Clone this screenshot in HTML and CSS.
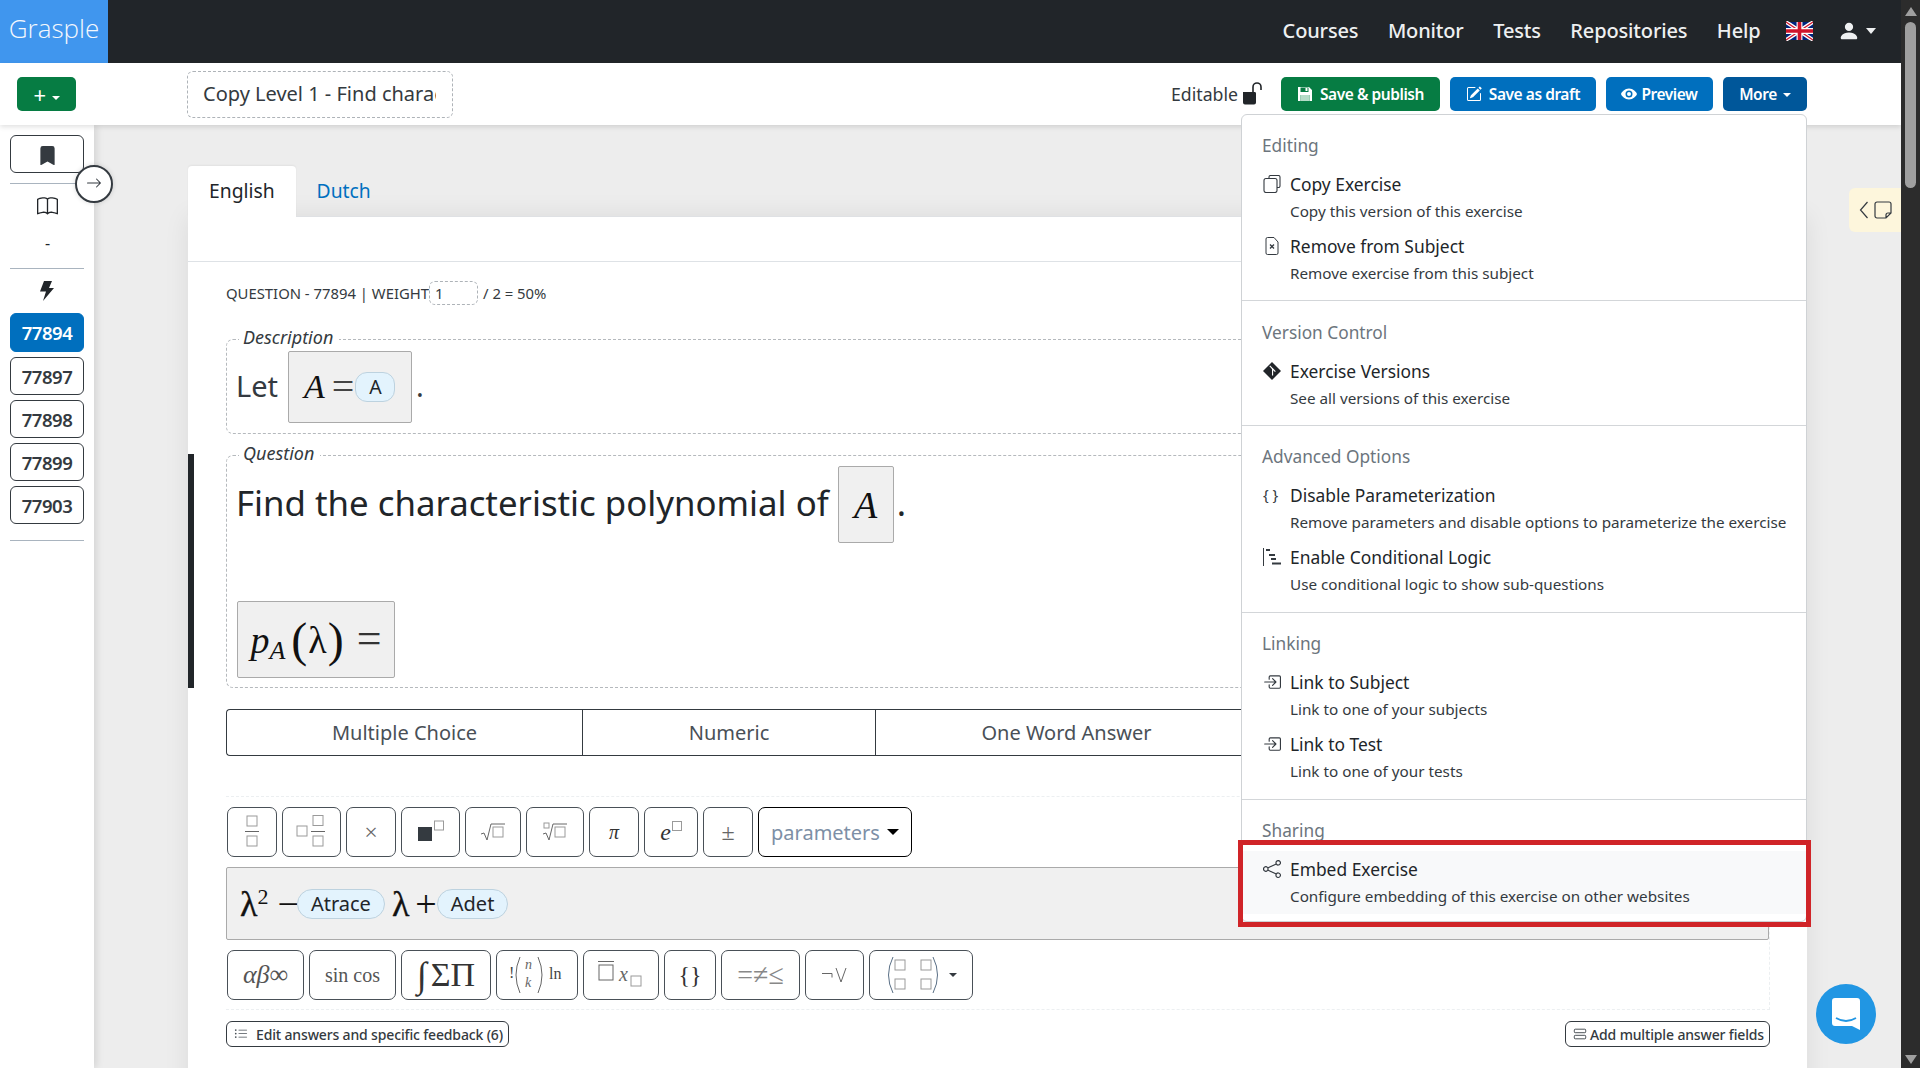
FILE: index.html
```html
<!DOCTYPE html>
<html lang="en">
<head>
<meta charset="UTF-8">
<title>Grasple</title>
<link rel="stylesheet" href="styles.css">
</head>
<body>
<div id="screen">
  <div id="page">
    <!-- top navigation -->
    <header class="navbar">
      <a class="logo">Grasple</a>
      <nav class="nav-links">
        <a>Courses</a>
        <a>Monitor</a>
        <a>Tests</a>
        <a>Repositories</a>
        <a>Help</a>
        <svg class="flag" viewBox="0 0 60 40">
          <rect width="60" height="40" fill="#fff"/>
          <path d="M0 0L60 40M60 0L0 40" stroke="#fff" stroke-width="8"/>
          <path d="M0 0L60 40M60 0L0 40" stroke="#cf142b" stroke-width="3"/>
          <path d="M8 0L25 11V0ZM52 0L35 11V0ZM0 5L15 15H0ZM60 5L45 15H60ZM0 35L15 25H0ZM60 35L45 25H60ZM8 40L25 29V40ZM52 40L35 29V40Z" fill="#00247d"/>
          <path d="M30 0V40M0 20H60" stroke="#fff" stroke-width="13"/>
          <path d="M30 0V40M0 20H60" stroke="#cf142b" stroke-width="8"/>
        </svg>
        <span class="user">
          <svg class="user-icon" viewBox="0 0 16 16"><path d="M3 14s-1 0-1-1 1-4 6-4 6 3 6 4-1 1-1 1H3zm5-6a3 3 0 1 0 0-6 3 3 0 0 0 0 6z"/></svg>
          <i class="caret"></i>
        </span>
      </nav>
    </header>

    <!-- edit toolbar -->
    <div class="toolbar">
      <button class="btn btn-green btn-plus">+<i class="caret caret-small"></i></button>
      <div class="title-input"><span>Copy Level 1 - Find characteristic polynomial</span></div>
      <div class="toolbar-right">
        <span class="editable">Editable</span>
        <svg class="lock" viewBox="0 0 20 24"><path d="M1 11h12a1.500 1.500 0 0 1 1 1.500v9a2 2 0 0 1-2 2H3a2 2 0 0 1-2-2z" fill="#212529"/><path d="M11 11V6a4 4 0 0 1 8 0v3" fill="none" stroke="#212529" stroke-width="1.600"/></svg>
        <button class="btn btn-green">
          <svg class="btn-icon" viewBox="0 0 16 16"><path d="M1 1h11l3 3v11H1zM3.500 1.500v4.500h8V1.500zM3.500 9v6h9V9z" fill="#fff" fill-rule="evenodd"/><path d="M8.500 2h2v3h-2z" fill="#fff"/><path d="M3.500 9h9v6h-9z" fill="#b5dcc8"/></svg>Save &amp; publish
        </button>
        <button class="btn btn-blue">
          <svg class="btn-icon" viewBox="0 0 16 16" fill="#fff"><path d="M15.502 1.940a.5.5 0 0 1 0 .706L14.459 3.690l-2-2L13.502.646a.5.5 0 0 1 .707 0l1.293 1.293zm-1.750 2.456-2-2L4.939 9.210a.5.5 0 0 0-.121.196l-.805 2.414a.25.25 0 0 0 .316.316l2.414-.805a.5.5 0 0 0 .196-.12l6.813-6.814z"/><path d="M1 13.500A1.500 1.500 0 0 0 2.500 15h11a1.500 1.500 0 0 0 1.500-1.500v-6a.5.5 0 0 0-1 0v6a.5.5 0 0 1-.5.5h-11a.5.5 0 0 1-.5-.5v-11a.5.5 0 0 1 .5-.5H9a.5.5 0 0 0 0-1H2.500A1.500 1.500 0 0 0 1 2.500v11z"/></svg>Save as draft
        </button>
        <button class="btn btn-blue">
          <svg class="btn-icon btn-icon-eye" viewBox="0 0 16 16"><path d="M8 2.500C12 2.500 15.500 6 16 8c-.5 2-4 5.500-8 5.500S.5 10 0 8c.5-2 4-5.500 8-5.500zm0 2a3.500 3.500 0 1 0 0 7 3.500 3.500 0 0 0 0-7zm0 1.500a2 2 0 1 1 0 4 2 2 0 0 1 0-4z" fill="#fff" fill-rule="evenodd"/></svg>Preview
        </button>
        <button class="btn btn-dark">More<i class="caret caret-small"></i></button>
      </div>
    </div>

    <div class="workspace">
      <!-- left sidebar -->
      <aside class="sidebar">
        <button class="side-btn side-top">
          <svg class="icon-bookmark" viewBox="0 0 16 16" fill="#343a40"><path d="M2 2v13.500a.5.5 0 0 0 .74.439L8 13.069l5.260 2.870A.5.5 0 0 0 14 15.500V2a2 2 0 0 0-2-2H4a2 2 0 0 0-2 2z"/></svg>
        </button>
        <hr class="side-rule side-rule-first">
        <svg class="side-book" viewBox="0 0 16 16" fill="#212529"><path d="M1 2.828c.885-.37 2.154-.769 3.388-.893 1.330-.134 2.458.063 3.112.752v9.746c-.935-.53-2.120-.603-3.213-.493-1.180.12-2.370.461-3.287.811V2.828zm7.500-.141c.654-.689 1.782-.886 3.112-.752 1.234.124 2.503.523 3.388.893v9.923c-.918-.35-2.107-.692-3.287-.81-1.094-.111-2.278-.039-3.213.492V2.687zM8 1.783C7.015.936 5.587.81 4.287.94c-1.514.153-3.042.672-3.994 1.105A.5.5 0 0 0 0 2.500v11a.5.5 0 0 0 .707.455c.882-.4 2.303-.881 3.680-1.020 1.409-.142 2.590.087 3.223.877a.5.5 0 0 0 .78 0c.633-.79 1.814-1.019 3.222-.877 1.378.139 2.800.62 3.681 1.020A.5.5 0 0 0 16 13.500v-11a.5.5 0 0 0-.293-.455c-.952-.433-2.480-.952-3.994-1.105C10.413.809 8.985.936 8 1.783z"/></svg>
        <div class="side-dash">-</div>
        <hr class="side-rule">
        <svg class="side-bolt" viewBox="0 0 14 20" fill="#212529"><path d="M4 0h8L9 7h5L3 20l3-9.500H0z"/></svg>
        <button class="side-btn side-active">77894</button>
        <button class="side-btn">77897</button>
        <button class="side-btn">77898</button>
        <button class="side-btn">77899</button>
        <button class="side-btn">77903</button>
        <hr class="side-rule side-rule-last">
      </aside>

      <main class="main">
        <div class="tabs">
          <a class="tab tab-active">English</a>
          <a class="tab">Dutch</a>
        </div>
        <div class="card">
          <div class="card-head"></div>
          <div class="card-body">
            <div class="question-line">
              <span>QUESTION - 77894 | WEIGHT</span>
              <span class="weight-input">1</span>
              <span>/ 2 = 50%</span>
            </div>

            <fieldset class="block block-description">
              <legend>Description</legend>
              <div class="text-line text-small">
                <span class="text-lift">Let</span>
                <span class="math-box math-a">
                  <span class="math"><i>A</i><span class="math-eq">=</span></span>
                  <span class="pill pill-mono">A</span>
                </span>
                <span class="dot text-lift">.</span>
              </div>
            </fieldset>

            <div class="question-block">
              <fieldset class="block block-question">
                <legend>Question</legend>
                <div class="text-line text-big">
                  <span class="text-lift">Find the characteristic polynomial of</span>
                  <span class="math-box math-single"><span class="math math-large"><i>A</i></span></span>
                  <span class="dot text-lift">.</span>
                </div>
                <div class="math-box math-answer">
                  <span class="math math-large"><i>p</i><sub><i>A</i></sub><span class="paren">(</span><span class="lambda">λ</span><span class="paren">)</span><span class="math-eq-2">=</span></span>
                </div>
              </fieldset>
            </div>

            <div class="answer-types">
              <button class="type-btn type-1">Multiple Choice</button>
              <button class="type-btn type-2">Numeric</button>
              <button class="type-btn type-3">One Word Answer</button>
            </div>

            <div class="editor">
              <div class="tool-row">
                <button class="tool w50"><svg width="24" height="34" viewBox="0 0 24 34"><rect x="7" y="1" width="10" height="10" class="box"/><path d="M5 16.500H19" class="line"/><rect x="7" y="21" width="10" height="10" class="box"/></svg></button>
                <button class="tool w59"><svg width="32" height="34" viewBox="0 0 32 34"><rect x="1" y="11" width="10" height="10" class="box"/><rect x="17" y="0.500" width="10" height="10" class="box"/><path d="M15 16.500H29" class="line"/><rect x="17" y="21" width="10" height="10" class="box"/></svg></button>
                <button class="tool w50 tool-sym tool-light">×</button>
                <button class="tool w59"><svg width="28" height="24" viewBox="0 0 28 24"><rect x="1" y="7" width="14" height="14" fill="#343a40"/><rect x="17.500" y="1" width="9" height="9" class="box"/></svg></button>
                <button class="tool w56"><svg width="26" height="20" viewBox="0 0 26 20"><path d="M1 12l3-1 3 7 4-16H25" class="line"/><rect x="13" y="5" width="10" height="10" class="box"/></svg></button>
                <button class="tool w58"><svg width="26" height="20" viewBox="0 0 26 20"><rect x="2" y="1" width="5" height="5" class="box"/><path d="M1 12l3-1 3 7 4-16H25" class="line"/><rect x="13" y="5" width="10" height="10" class="box"/></svg></button>
                <button class="tool w50 tool-serif"><i>π</i></button>
                <button class="tool w54 tool-serif tool-e"><i>e</i><svg class="sup-box" width="10" height="10" viewBox="0 0 10 10"><rect x=".5" y=".5" width="9" height="9" class="box"/></svg></button>
                <button class="tool w50 tool-sym tool-light">±</button>
                <button class="tool tool-params">parameters<i class="caret caret-black"></i></button>
              </div>

              <div class="math-field">
                <span class="math math-lambda">λ<sup>2</sup></span>
                <span class="math math-op">−</span>
                <span class="pill">Atrace</span>
                <span class="math math-lambda math-lambda-2">λ</span>
                <span class="math math-op math-plus">+</span>
                <span class="pill">Adet</span>
              </div>

              <div class="tool-row tool-row-2">
                <button class="tool w77 tool-serif tool-grey tool-alpha"><i>αβ</i>∞</button>
                <button class="tool w87 tool-serif tool-grey">sin cos</button>
                <button class="tool w90 tool-serif tool-big"><i class="integral">∫</i>ΣΠ</button>
                <button class="tool w82 tool-serif"><svg width="56" height="38" viewBox="0 0 56 38"><text x="0" y="22" class="svg-math">!</text><path d="M11 1Q3 19 11 37M29 1Q37 19 29 37" class="line"/><text x="16" y="13" class="svg-math-i">n</text><text x="16" y="31" class="svg-math-i">k</text><text x="40" y="23" class="svg-math">ln</text></svg></button>
                <button class="tool w76"><svg width="46" height="30" viewBox="0 0 46 30"><path d="M0 1.500H16" class="line"/><rect x="1" y="5" width="14" height="15" class="box box-dark"/><text x="21" y="21" class="svg-math-i svg-math-big">x</text><rect x="33" y="16" width="10" height="10" class="box"/></svg></button>
                <button class="tool w52 tool-serif tool-big-2">{}</button>
                <button class="tool w79 tool-sym tool-light tool-wide">=≠≤</button>
                <button class="tool w59"><svg width="28" height="16" viewBox="0 0 28 16"><path d="M1 6.500H11V10.500M15 1l5 14 5-14" class="line"/></svg></button>
                <button class="tool w104"><svg width="56" height="38" viewBox="0 0 56 38"><path d="M8 1Q-1 19 8 37M48 1Q57 19 48 37" class="line-blue"/><rect x="10" y="4" width="10" height="10" class="box"/><rect x="36" y="4" width="10" height="10" class="box"/><rect x="10" y="23" width="10" height="10" class="box"/><rect x="36" y="23" width="10" height="10" class="box"/></svg><i class="caret caret-small caret-dark"></i></button>
              </div>
            </div>

            <div class="bottom-row">
              <button class="small-btn">
                <svg class="icon-13 icon-list" viewBox="0 0 16 16" fill="#495057"><path d="M5 11.500a.5.5 0 0 1 .5-.5h9a.5.5 0 0 1 0 1h-9a.5.5 0 0 1-.5-.5zm0-4a.5.5 0 0 1 .5-.5h9a.5.5 0 0 1 0 1h-9a.5.5 0 0 1-.5-.5zm0-4a.5.5 0 0 1 .5-.5h9a.5.5 0 0 1 0 1h-9a.5.5 0 0 1-.5-.5zm-3 1a1 1 0 1 0 0-2 1 1 0 0 0 0 2zm0 4a1 1 0 1 0 0-2 1 1 0 0 0 0 2zm0 4a1 1 0 1 0 0-2 1 1 0 0 0 0 2z"/></svg>Edit answers and specific feedback (6)
              </button>
              <button class="small-btn small-btn-right">
                <svg class="icon-13" viewBox="0 0 16 16" fill="none" stroke="#343a40"><rect x="1.500" y="2.500" width="13" height="4" rx="1"/><rect x="1.500" y="9.500" width="13" height="4" rx="1"/></svg>Add multiple answer fields
              </button>
            </div>
          </div>
        </div>
      </main>
    </div>

    <!-- things lying over the page -->
    <button class="collapse-btn">
      <svg class="icon-16" viewBox="0 0 16 16" fill="#343a40"><path d="M1 8a.5.5 0 0 1 .5-.5h11.793l-3.147-3.146a.5.5 0 0 1 .708-.708l4 4a.5.5 0 0 1 0 .708l-4 4a.5.5 0 0 1-.708-.708L13.293 8.500H1.500A.5.5 0 0 1 1 8z"/></svg>
    </button>

    <div class="note-tab">
      <svg width="10" height="18" viewBox="0 0 10 18"><path d="M8.500 1L1.500 9l7 8" fill="none" stroke="#343a40" stroke-width="1.200"/></svg>
      <svg width="18" height="18" viewBox="0 0 18 18"><path d="M12 17H3a2 2 0 0 1-2-2V3a2 2 0 0 1 2-2h12a2 2 0 0 1 2 2v9zM12 17v-3a2 2 0 0 1 2-2h3" fill="none" stroke="#343a40" stroke-width="1.200"/></svg>
    </div>

    <div class="chat-bubble">
      <svg width="28" height="32" viewBox="0 0 28 32"><path d="M3 0h22a3 3 0 0 1 3 3v29l-8-4H3a3 3 0 0 1-3-3V3a3 3 0 0 1 3-3z" fill="#fff"/><path d="M4 20q10 6 20 0" fill="none" stroke="#2196e3" stroke-width="1.800"/></svg>
    </div>

    <!-- More menu -->
    <div class="dropdown">
      <section class="menu-section">
        <h6>Editing</h6>
        <a class="menu-item">
          <svg class="menu-icon" viewBox="0 0 18 18" fill="none" stroke="#343a40" stroke-width="1.100"><path d="M6 3.500V2a1.500 1.500 0 0 1 1.500-1.500h8A1.500 1.500 0 0 1 17 2v9a1.500 1.500 0 0 1-1.500 1.500H14"/><rect x="1" y="3.500" width="13" height="14" rx="2"/></svg>
          <b>Copy Exercise</b><span>Copy this version of this exercise</span>
        </a>
        <a class="menu-item">
          <svg class="menu-icon" viewBox="0 0 18 18" fill="none" stroke="#343a40"><path d="M4.500.5H11l4 4.500V16a1.500 1.500 0 0 1-1.500 1.500h-9A1.500 1.500 0 0 1 3 16V2A1.500 1.500 0 0 1 4.500.5z"/><path d="M7 7.500l4 4M11 7.500l-4 4" stroke-width="1.300"/></svg>
          <b>Remove from Subject</b><span>Remove exercise from this subject</span>
        </a>
      </section>
      <section class="menu-section">
        <h6>Version Control</h6>
        <a class="menu-item">
          <svg class="menu-icon" viewBox="0 0 16 16"><path d="M8 0l8 8-8 8-8-8z" fill="#212529"/><path d="M6 3.500l2.500 2.500v6M8.500 6l2.500 2.500" stroke="#fff" fill="none"/></svg>
          <b>Exercise Versions</b><span>See all versions of this exercise</span>
        </a>
      </section>
      <section class="menu-section">
        <h6>Advanced Options</h6>
        <a class="menu-item">
          <span class="menu-icon menu-braces">{ }</span>
          <b>Disable Parameterization</b><span>Remove parameters and disable options to parameterize the exercise</span>
        </a>
        <a class="menu-item">
          <svg class="menu-icon" viewBox="0 0 18 18"><path d="M.5 0v18" stroke="#343a40" fill="none"/><path d="M3 1h4v2H3zM6 6h6v2H6zM8 10h5v2H8zM9 14.500h9v2H9z" fill="#343a40"/></svg>
          <b>Enable Conditional Logic</b><span>Use conditional logic to show sub-questions</span>
        </a>
      </section>
      <section class="menu-section">
        <h6>Linking</h6>
        <a class="menu-item">
          <svg class="menu-icon" viewBox="0 0 16 16" fill="#343a40"><path d="M6 3.500a.5.5 0 0 1 .5-.5h8a.5.5 0 0 1 .5.5v9a.5.5 0 0 1-.5.5h-8a.5.5 0 0 1-.5-.5v-2a.5.5 0 0 0-1 0v2A1.500 1.500 0 0 0 6.500 14h8a1.500 1.500 0 0 0 1.500-1.500v-9A1.500 1.500 0 0 0 14.500 2h-8A1.500 1.500 0 0 0 5 3.500v2a.5.5 0 0 0 1 0v-2z"/><path d="M11.854 8.354a.5.5 0 0 0 0-.708l-3-3a.5.5 0 1 0-.708.708L10.293 7.500H1.500a.5.5 0 0 0 0 1h8.793l-2.147 2.146a.5.5 0 0 0 .708.708l3-3z"/></svg>
          <b>Link to Subject</b><span>Link to one of your subjects</span>
        </a>
        <a class="menu-item">
          <svg class="menu-icon" viewBox="0 0 16 16" fill="#343a40"><path d="M6 3.500a.5.5 0 0 1 .5-.5h8a.5.5 0 0 1 .5.5v9a.5.5 0 0 1-.5.5h-8a.5.5 0 0 1-.5-.5v-2a.5.5 0 0 0-1 0v2A1.500 1.500 0 0 0 6.500 14h8a1.500 1.500 0 0 0 1.500-1.500v-9A1.500 1.500 0 0 0 14.500 2h-8A1.500 1.500 0 0 0 5 3.500v2a.5.5 0 0 0 1 0v-2z"/><path d="M11.854 8.354a.5.5 0 0 0 0-.708l-3-3a.5.5 0 1 0-.708.708L10.293 7.500H1.500a.5.5 0 0 0 0 1h8.793l-2.147 2.146a.5.5 0 0 0 .708.708l3-3z"/></svg>
          <b>Link to Test</b><span>Link to one of your tests</span>
        </a>
      </section>
      <section class="menu-section menu-section-last">
        <h6>Sharing</h6>
        <a class="menu-item menu-item-hover">
          <svg class="menu-icon" viewBox="0 0 16 16" fill="#343a40"><path d="M13.500 1a1.500 1.500 0 1 0 0 3 1.500 1.500 0 0 0 0-3zM11 2.500a2.500 2.500 0 1 1 .603 1.628l-6.718 3.120a2.499 2.499 0 0 1 0 1.504l6.718 3.120a2.500 2.500 0 1 1-.488.876l-6.718-3.120a2.500 2.500 0 1 1 0-3.256l6.718-3.120A2.500 2.500 0 0 1 11 2.500zm-8.500 4a1.500 1.500 0 1 0 0 3 1.500 1.500 0 0 0 0-3zm11 5.500a1.500 1.500 0 1 0 0 3 1.500 1.500 0 0 0 0-3z"/></svg>
          <b>Embed Exercise</b><span>Configure embedding of this exercise on other websites</span>
        </a>
      </section>
    </div>
    <div class="highlight-box"></div>
  </div>

  <!-- browser scrollbar -->
  <div class="scrollbar">
    <i class="arrow-up"></i>
    <div class="thumb"></div>
    <i class="arrow-down"></i>
  </div>
</div>
</body>
</html>
```
FILE: styles.css
```css
* {
  box-sizing: border-box;
}
html, body {
  margin: 0;
  height: 1068px;
  overflow: hidden;
}
body {
  font-family: "Noto Sans", sans-serif;
  color: #212529;
  background: #ededed;
}
button {
  font-family: inherit;
  cursor: pointer;
}
#screen {
  display: flex;
  height: 1068px;
}
#page {
  position: relative;
  flex: 1;
  min-width: 0;
  display: flex;
  flex-direction: column;
  overflow: hidden;
}

/* scrollbar */
.scrollbar {
  width: 19px;
  background: #2c2c2c;
  display: flex;
  flex-direction: column;
  align-items: center;
  padding: 7px 0 4px;
}
.thumb {
  width: 11px;
  height: 166px;
  margin-top: 6px;
  border-radius: 6px;
  background: #9f9f9f;
}
.arrow-up, .arrow-down {
  width: 0;
  height: 0;
  border-left: 6px solid transparent;
  border-right: 6px solid transparent;
}
.arrow-up {
  border-bottom: 9px solid #9f9f9f;
}
.arrow-down {
  margin-top: auto;
  border-top: 9px solid #9f9f9f;
}

/* navbar */
.navbar {
  height: 63px;
  flex: none;
  background: #212529;
  display: flex;
  align-items: center;
  justify-content: space-between;
}
.logo {
  width: 108px;
  height: 63px;
  background: #4096ee;
  color: #f4f8fd;
  font-size: 26px;
  font-weight: 300;
  line-height: 57px;
  text-align: center;
  font-family: "Open Sans", sans-serif;
}
.nav-links {
  display: flex;
  align-items: center;
  gap: 29.500px;
  margin-right: 25px;
  color: #eef0f1;
  font-size: 20px;
  font-weight: 500;
  letter-spacing: -.15px;
  line-height: 24px;
  padding-bottom: 2px;
}
.flag {
  width: 27px;
  height: 20px;
  margin-left: -4px;
}
.user {
  display: flex;
  align-items: center;
  gap: 6px;
  margin-left: -4.500px;
}
.user-icon {
  width: 22px;
  height: 22px;
  fill: #eef0f1;
}
.caret {
  display: inline-block;
  width: 0;
  height: 0;
  border-left: 5.500px solid transparent;
  border-right: 5.500px solid transparent;
  border-top: 6px solid #eef0f1;
}
.caret-small {
  border-left-width: 4px;
  border-right-width: 4px;
  border-top: 4px solid #fff;
  margin-left: 6px;
  vertical-align: 3px;
}
.caret-dark {
  border-top-color: #343a40;
  margin-left: 8px;
  vertical-align: 14px;
}
.caret-black {
  border-left-width: 6px;
  border-right-width: 6px;
  border-top-color: #000;
  margin-left: 7px;
  vertical-align: 3px;
}

/* toolbar */
.toolbar {
  position: relative;
  z-index: 2;
  height: 62px;
  flex: none;
  background: #fff;
  box-shadow: 0 2px 5px rgba(0, 0, 0, .12);
  display: flex;
  align-items: center;
  padding-left: 17px;
}
.btn {
  height: 34px;
  border: 0;
  border-radius: 5px;
  color: #fff;
  font-size: 15.500px;
  font-weight: 600;
  letter-spacing: -.45px;
  padding: 0;
  white-space: nowrap;
}
.btn-green {
  background: #067c43;
  width: 159px;
}
.btn-blue {
  background: #006fbe;
  width: 146px;
}
.btn-blue + .btn-blue {
  width: 107px;
}
.btn-dark {
  background: #00579a;
  width: 84px;
}
.btn-plus {
  width: 59px;
  font-size: 22px;
  font-weight: 400;
  line-height: 30px;
}
.btn-icon {
  width: 16px;
  height: 16px;
  margin-right: 7px;
  vertical-align: -2px;
}
.btn-icon-eye {
  margin-right: 4px;
}
.title-input {
  width: 266px;
  height: 47px;
  margin-left: 111px;
  border: 1px dashed #aeb3b8;
  border-radius: 6px;
  padding: 0 16px 0 15px;
  font-size: 20px;
  line-height: 43px;
  color: #343a40;
  overflow: hidden;
  white-space: nowrap;
}
.title-input span {
  display: block;
  overflow: hidden;
}
.toolbar-right {
  margin-left: auto;
  margin-right: 94px;
  display: flex;
  align-items: center;
  gap: 10px;
}
.editable {
  font-size: 17.700px;
  color: #343a40;
  margin-right: -6px;
}
.lock {
  width: 20px;
  height: 24px;
  margin-right: 9px;
  margin-top: -2px;
}

/* sidebar */
.workspace {
  flex: 1;
  display: flex;
  min-height: 0;
}
.sidebar {
  position: relative;
  z-index: 1;
  width: 94px;
  flex: none;
  background: #fff;
  box-shadow: 2px 0 8px rgba(0, 0, 0, .12);
  padding: 10px 10px 0;
  display: flex;
  flex-direction: column;
  align-items: stretch;
}
.side-btn {
  height: 38px;
  margin-bottom: 5px;
  padding: 0;
  background: #fff;
  border: 1px solid #343a40;
  border-radius: 6px;
  font-size: 18.500px;
  font-weight: 600;
  letter-spacing: -.45px;
  color: #343a40;
}
.side-top {
  margin-bottom: 0;
}
.side-active {
  height: 39px;
  background: #006fbe;
  border-color: #006fbe;
  color: #fff;
}
.side-rule {
  width: 100%;
  height: 1px;
  flex: none;
  margin: 0;
  border: 0;
  background: #a9b4bf;
}
.side-rule-first {
  margin-top: 10px;
}
.side-rule-last {
  margin-top: 11px;
}
.side-book {
  width: 21px;
  height: 21px;
  margin: 12px auto 0;
}
.side-dash {
  height: 24px;
  margin-top: 15px;
  margin-bottom: 12px;
  text-align: center;
  font-size: 16px;
  line-height: 22px;
  padding-left: 1px;
}
.side-bolt {
  width: 14px;
  height: 20px;
  margin: 12px auto 12px;
}
.icon-bookmark {
  width: 19px;
  height: 19px;
  vertical-align: -3px;
}
.icon-16 {
  width: 16px;
  height: 16px;
  vertical-align: -2px;
}
.collapse-btn {
  position: absolute;
  z-index: 3;
  left: 75px;
  top: 165px;
  width: 38px;
  height: 38px;
  padding: 0;
  background: #fff;
  border: 2px solid #343a40;
  border-radius: 50%;
  box-shadow: 0 0 5px rgba(0, 0, 0, .15);
}

/* main area */
.main {
  flex: 1;
  min-width: 0;
  padding: 41px 94px 0;
}
.tabs {
  display: flex;
  height: 51px;
}
.tab {
  padding: 0 21px;
  font-size: 19.300px;
  line-height: 50px;
  color: #0070c0;
}
.tab-active {
  position: relative;
  z-index: 1;
  color: #212529;
  background: #fff;
  border-radius: 4px 4px 0 0;
  box-shadow: 0 -1px 2px rgba(0, 0, 0, .05);
}
.card {
  background: #fff;
  height: 900px;
  box-shadow: 0 0 24px rgba(0, 0, 0, .08);
  border-top: 1px solid #dfe1e4;
  margin-top: -1px;
}
.card-head {
  height: 45px;
  border-bottom: 1px solid #dee2e6;
}
.card-body {
  padding: 19px 37px 0 38px;
}
.question-line {
  display: flex;
  align-items: center;
  height: 24px;
  font-size: 14.850px;
  color: #343a40;
}
.weight-input {
  width: 49px;
  height: 24px;
  margin: 0 5px 0 0;
  padding-left: 5px;
  border: 1px dashed #aeb3b8;
  border-radius: 6px;
  line-height: 22px;
}

/* question blocks */
.block {
  margin: 0;
  padding: 0 9px 9px;
  min-width: 0;
  border: 1px dashed #b5b9bd;
  border-radius: 7px;
}
.block legend {
  margin-left: 3px;
  padding: 0 6px 0 4px;
  font-size: 18px;
  font-style: italic;
  line-height: 22px;
  color: #343a40;
  transform: translateY(-2px);
}
.block-description {
  margin-top: 23px;
  height: 106px;
}
.block-question {
  height: 244px;
  flex: none;
}
.question-block {
  margin-left: -38px;
  margin-top: 20px;
  padding-left: 32px;
  height: 234px;
  border-left: 6px solid #212529;
  display: flex;
  align-items: flex-end;
}
.question-block .block {
  width: 100%;
}
.text-line {
  display: flex;
  align-items: center;
  gap: 10px;
}
.text-small {
  font-size: 29px;
  color: #343a40;
  margin-top: 1px;
}
.text-big {
  font-size: 34.800px;
  color: #212529;
  height: 77px;
  gap: 9px;
}
.text-lift {
  padding-bottom: 4px;
}
.dot {
  margin-left: -6px;
}
.math-box {
  display: flex;
  align-items: center;
  background: #f0f0f0;
  border: 1px solid #aaa;
  border-radius: 2px;
  justify-content: center;
}
.math-a {
  width: 124px;
  height: 72px;
  justify-content: flex-start;
  padding-left: 15px;
}
.math-single {
  width: 56px;
  height: 77px;
}
.math-answer {
  width: 158px;
  height: 77px;
  margin-top: 58px;
  margin-left: 1px;
}
.math {
  font-family: "Liberation Serif", serif;
  font-size: 34px;
  color: #111;
  white-space: nowrap;
}
.math-large {
  font-size: 38px;
}
.math sub {
  font-size: 26px;
  vertical-align: -6px;
  line-height: 0;
}
.math-eq {
  display: inline-block;
  font-size: 40px;
  line-height: 30px;
  margin: 0 1px 0 7px;
  color: #444;
  vertical-align: -2px;
}
.math-eq-2 {
  margin-left: 12px;
  font-size: 44px;
  line-height: 30px;
  color: #333;
}
.paren {
  font-size: 48px;
  font-weight: 400;
  line-height: 30px;
  vertical-align: -3px;
  margin: 0 1px;
}
.paren:first-of-type {
  margin-left: 6px;
}
.lambda {
  font-weight: 400;
}
.pill {
  display: inline-block;
  padding: 0 13px;
  height: 30px;
  line-height: 28px;
  font-size: 20px;
  color: #212529;
  background: #e3f3fd;
  border: 1px solid #bdd2df;
  border-radius: 15px;
}
.pill-mono {
  width: 40px;
  padding: 0;
  text-align: center;
  border-radius: 12px;
  font-size: 19.500px;
  flex: none;
}

/* answer type buttons */
.answer-types {
  display: flex;
  margin-top: 21px;
  height: 47px;
}
.type-btn {
  height: 47px;
  padding: 0;
  background: #fff;
  border: 1px solid #343a40;
  border-right: 0;
  font-size: 20px;
  color: #495057;
}
.type-1 {
  width: 356px;
  border-radius: 4px 0 0 4px;
}
.type-2 {
  width: 293px;
}
.type-3 {
  width: 382px;
}

/* formula editor */
.editor {
  margin-top: 40px;
  height: 214px;
  padding: 10px 0;
  border: 1px dashed #eceff1;
  border-left: 0;
  border-right: 1px dashed #eceff1;
}
.tool-row {
  display: flex;
  gap: 5px;
  height: 50px;
  padding-left: 1px;
}
.tool {
  height: 50px;
  padding: 0;
  background: #fff;
  border: 1px solid #495057;
  border-radius: 7px;
  display: flex;
  align-items: center;
  justify-content: center;
  flex: none;
}
.w50 { width: 50px; }
.w52 { width: 52px; }
.w54 { width: 54px; }
.w56 { width: 56px; }
.w58 { width: 58px; }
.w59 { width: 59px; }
.w76 { width: 76px; }
.w77 { width: 77px; }
.w79 { width: 79px; }
.w82 { width: 82px; }
.w87 { width: 87px; }
.w90 { width: 90px; }
.w104 { width: 104px; }
.box {
  fill: #fff;
  stroke: #9a9a9a;
}
.box-dark {
  stroke: #666;
}
.line {
  fill: none;
  stroke: #666;
}
.line-blue {
  fill: none;
  stroke: #5a6f86;
}
.svg-math {
  font-family: "Liberation Serif", serif;
  font-size: 16px;
  fill: #444;
}
.svg-math-i {
  font-family: "Liberation Serif", serif;
  font-style: italic;
  font-size: 14px;
  fill: #666;
}
.svg-math-big {
  font-size: 20px;
}
.tool-sym {
  font-family: "Liberation Serif", serif;
  font-size: 24px;
}
.tool-light {
  color: #666;
}
.tool-wide {
  font-size: 28px;
  color: #888;
}
.tool-serif {
  font-family: "Liberation Serif", serif;
  font-size: 20px;
  color: #333;
}
.tool-e {
  font-size: 24px;
}
.tool-grey {
  color: #555;
}
.tool-alpha {
  font-size: 26px;
}
.tool-big {
  font-size: 34px;
  letter-spacing: 0;
  font-weight: 400;
}
.tool-big-2 {
  font-size: 24px;
}
.integral {
  font-size: 36px;
  margin-right: 4px;
  font-weight: 400;
}
.sup-box {
  margin-top: -12px;
  margin-left: 1px;
}
.tool-params {
  width: 154px;
  border-color: #000;
  font-size: 20px;
  color: #7d8fa6;
}
.math-field {
  display: flex;
  align-items: center;
  height: 73px;
  margin-top: 10px;
  padding-left: 13px;
  background: #f0f0f0;
  border: 1px solid #aaa;
  border-radius: 2px;
}
.math-lambda {
  font-size: 36px;
  margin-right: 9px;
  -webkit-text-stroke: .4px #111;
}
.math-lambda sup {
  font-size: 22px;
  vertical-align: 12px;
  line-height: 0;
  -webkit-text-stroke: 0;
}
.math-lambda-2 {
  margin-left: 7px;
  margin-right: 6px;
}
.math-op {
  font-size: 38px;
  line-height: 36px;
  margin-right: -2px;
}
.math-plus {
  margin-right: 0;
}
.tool-row-2 {
  margin-top: 10px;
}

/* buttons below the editor */
.bottom-row {
  display: flex;
  justify-content: space-between;
  margin-top: 11px;
}
.small-btn {
  height: 26px;
  padding: 0 5px 0 7px;
  background: #fff;
  border: 1px solid #343a40;
  border-radius: 6px;
  font-size: 14px;
  font-weight: 500;
  letter-spacing: -.15px;
  color: #343a40;
  display: flex;
  align-items: center;
}
.icon-13 {
  width: 14px;
  height: 14px;
  margin-right: 3px;
}
.icon-list {
  margin-right: 8px;
}

/* note tab, chat */
.note-tab {
  position: absolute;
  z-index: 3;
  right: 0;
  top: 188px;
  width: 52px;
  height: 44px;
  background: #fdf6dc;
  border-radius: 6px 0 0 6px;
  display: flex;
  align-items: center;
  justify-content: center;
  gap: 5px;
}
.chat-bubble {
  position: absolute;
  z-index: 3;
  left: 1816px;
  top: 984px;
  width: 60px;
  height: 60px;
  border-radius: 50%;
  background: #2196e3;
  display: flex;
  align-items: center;
  justify-content: center;
}

/* More dropdown */
.dropdown {
  position: absolute;
  z-index: 4;
  left: 1241px;
  top: 114px;
  width: 566px;
  height: 808px;
  background: #fff;
  border: 1px solid #cfd2d5;
  border-radius: 6px;
}
.menu-section {
  border-bottom: 1px solid #d3d6d9;
  padding: 17px 0 10px;
}
.menu-section:nth-of-type(2) {
  padding-top: 18px;
}
.menu-section:nth-of-type(n+3) {
  padding-bottom: 11px;
}
.menu-section-last {
  border-bottom: 0;
}
.menu-section h6 {
  margin: 0;
  padding: 0 20px;
  height: 34px;
  font-size: 17.300px;
  font-weight: 400;
  line-height: 28px;
  color: #6c757d;
}
.menu-item {
  position: relative;
  display: block;
  height: 62px;
  padding: 5px 0 0 48px;
}
.menu-item b {
  display: block;
  height: 27px;
  font-size: 17.400px;
  font-weight: 400;
  line-height: 27px;
  color: #212529;
}
.menu-item span {
  display: block;
  font-size: 15.250px;
  line-height: 27px;
  color: #343a40;
}
.menu-item .menu-icon {
  position: absolute;
  left: 21px;
  top: 9px;
  width: 18px;
  height: 18px;
}
.menu-item .menu-braces {
  font-size: 15px;
  line-height: 17px;
  white-space: nowrap;
}
.menu-item-hover {
  height: 63px;
  background: #f8f9fa;
}
.highlight-box {
  position: absolute;
  z-index: 5;
  left: 1238px;
  top: 840px;
  width: 573px;
  height: 87px;
  border: 5px solid #d02428;
}
```
